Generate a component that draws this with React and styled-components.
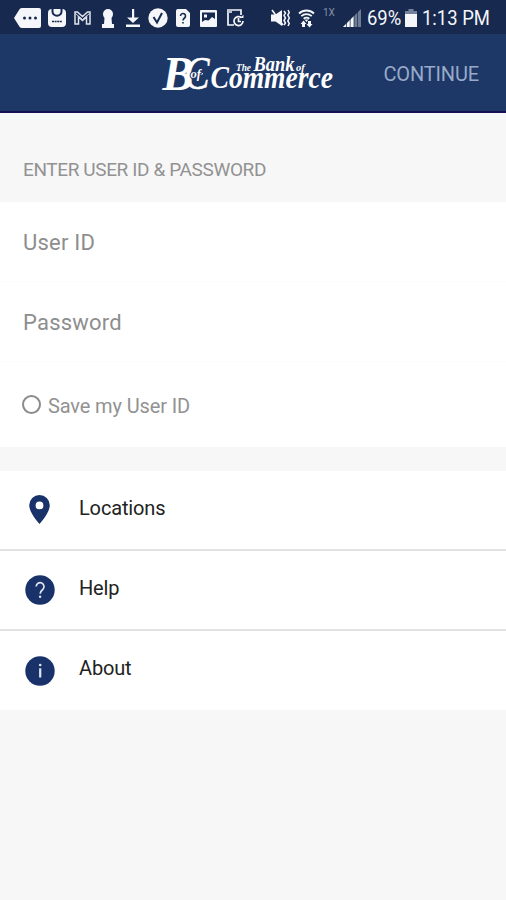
import React from "react";
import styled, { createGlobalStyle } from "styled-components";

const GlobalStyle = createGlobalStyle`
  * {
    box-sizing: border-box;
  }
  body {
    margin: 0;
    background-color: #f7f7f7;
    font-family: Roboto, "Liberation Sans", sans-serif;
  }
`;

const Screen = styled.div`
  width: 100%;
  min-height: 900px;
  background-color: #f7f7f7;
`;

const StatusBar = styled.div`
  height: 34px;
  display: flex;
  align-items: center;
  padding: 2px 15px 0 14px;
  background-color: #17294f;
  color: #f4f6fa;
`;

const StatusIcon = styled.svg`
  display: block;
  flex: none;
  margin-left: ${(props) => props.$gap || 0}px;
  fill: #f4f6fa;
`;

const StatusText = styled.span`
  flex: none;
  width: ${(props) => props.$width}px;
  margin-left: ${(props) => props.$gap}px;
  font-size: 20.5px;
  line-height: 32px;
  white-space: nowrap;
  transform: scaleX(0.9);
  transform-origin: left center;
`;

const NetworkLabel = styled.span`
  flex: none;
  align-self: flex-start;
  width: 13px;
  margin-left: 8px;
  padding-top: 5px;
  font-size: 10px;
  line-height: 12px;
  color: #8590a8;
`;

const Header = styled.header`
  height: 79px;
  display: flex;
  align-items: center;
  justify-content: space-between;
  padding: 2px 27px 0 160px;
  background-color: #1d3766;
  border-bottom: 2px solid #160f55;
`;

const Logo = styled.svg`
  display: block;
  overflow: visible;
  fill: #ffffff;
  font-family: "Liberation Serif", serif;
  font-style: italic;
  font-weight: bold;
`;

const ContinueButton = styled.button`
  padding: 0;
  border: none;
  background: none;
  font-family: inherit;
  font-size: 20px;
  letter-spacing: -0.15px;
  color: #98aac9;
`;

const SectionTitle = styled.h2`
  height: 89px;
  margin: 0;
  padding: 45px 23px 0;
  font-size: 19px;
  font-weight: 400;
  line-height: 24px;
  letter-spacing: -0.38px;
  color: #929292;
`;

const Form = styled.form`
  background-color: #ffffff;
`;

const Field = styled.input`
  display: block;
  width: 100%;
  height: 80px;
  padding: 2px 23px 0;
  border: none;
  border-bottom: 1px solid #fcfcfc;
  outline: none;
  background: none;
  font-family: inherit;
  font-size: 22px;
  letter-spacing: 0.2px;

  &::placeholder {
    color: #8e8e8e;
    opacity: 1;
  }
`;

const SaveRow = styled.label`
  height: 85px;
  display: flex;
  align-items: center;
  padding: 2px 22px 0;
  font-size: 20px;
  letter-spacing: -0.13px;
  color: #929292;
`;

const Radio = styled.span`
  width: 19px;
  height: 19px;
  margin: 0 7px 2px 0;
  border: 2px solid #8b8b8b;
  border-radius: 50%;
`;

const Menu = styled.ul`
  margin: 24px 0 0;
  padding: 0;
  list-style: none;
  background-color: #ffffff;
`;

const MenuItem = styled.li`
  height: 80px;
  display: flex;
  align-items: center;
  padding: 0 24px;
  border-bottom: 2px solid #e2e2e2;
  font-size: 20px;
  letter-spacing: -0.15px;
  color: #222222;

  &:last-child {
    height: 79px;
    border-bottom: none;
  }

  svg {
    width: 32px;
    height: 32px;
    margin-right: 23px;
  }

  span {
    padding-bottom: 4px;
  }

  &:last-child span {
    padding-bottom: 6px;
  }
`;

const NotificationIcons = () => (
  <>
    <StatusIcon width="27" height="20" viewBox="0 0 27 20">
      <path d="M8 0h17a2 2 0 0 1 2 2v16a2 2 0 0 1-2 2H8a3 3 0 0 1-2.300-1L0 10l5.700-9A3 3 0 0 1 8 0Z" />
      <g fill="#17294f">
        <circle cx="10.500" cy="10" r="1.500" />
        <circle cx="16" cy="10" r="1.500" />
        <circle cx="21.500" cy="10" r="1.500" />
      </g>
    </StatusIcon>
    <StatusIcon $gap={7} width="18" height="18" viewBox="0 0 18 18">
      <rect width="18" height="18" rx="4" />
      <path d="M4.500 0v2.500c0 5.500 9 5.500 9 0V0" stroke="#17294f" strokeWidth="2" />
      <path d="M4 12.500h10" stroke="#17294f" strokeWidth="1.300" strokeDasharray="2 .6" />
    </StatusIcon>
    <StatusIcon $gap={8} width="17" height="14" viewBox="0 0 17 14">
      <path
        d="M1 13V1h2.500l5 4.500 5-4.500H16v12h-3.500V6l-4 3.500-4-3.500v7Z"
        fill="none"
        stroke="#dfe3eb"
        strokeWidth="1.500"
      />
      <path d="M1.500 2.500 8.500 8.500l7-6" fill="none" stroke="#d5dae4" />
    </StatusIcon>
    <StatusIcon $gap={11} width="12" height="19" viewBox="0 0 12 19">
      <path d="M6 0a5 5 0 0 1 5 5c0 1.800-.8 3-1.500 4l.5 6h2v4H0v-4h2l.5-6C1.800 8 1 6.800 1 5a5 5 0 0 1 5-5Z" />
    </StatusIcon>
    <StatusIcon $gap={12} width="14" height="18" viewBox="0 0 14 18">
      <path d="M6 0h2.200v8.500H13L7 14 1 8.500h5ZM0 15.600h14V18H0Z" />
    </StatusIcon>
    <StatusIcon $gap={8} width="20" height="20" viewBox="0 0 20 20">
      <circle cx="10" cy="10" r="9.700" />
      <path d="m5.500 9 3.500 5.500L14 5" fill="none" stroke="#17294f" strokeWidth="2" />
    </StatusIcon>
    <StatusIcon $gap={8} width="14" height="18" viewBox="0 0 14 18">
      <path d="M2 0h8l4 4v12a2 2 0 0 1-2 2H2a2 2 0 0 1-2-2V2a2 2 0 0 1 2-2Z" />
      <path
        d="M4.500 7a2.500 2.500 0 1 1 4 2C7.400 9.800 7 10.300 7 11.500M7 13v1.600"
        fill="none"
        stroke="#17294f"
        strokeWidth="1.600"
      />
    </StatusIcon>
    <StatusIcon $gap={10} width="17" height="17" viewBox="0 0 17 17">
      <path
        fillRule="evenodd"
        d="M1 0h15a1 1 0 0 1 1 1v15a1 1 0 0 1-1 1H1a1 1 0 0 1-1-1V1a1 1 0 0 1 1-1Zm1 2.500V12l3-2 3.500.5L12 7l3 2V2.500Z"
      />
      <rect x="4" y="4.500" width="3" height="3" />
    </StatusIcon>
    <StatusIcon $gap={10} width="17" height="18" viewBox="0 0 17 18">
      <path d="M14 6V1H1v15h6" fill="none" stroke="#f4f6fa" strokeWidth="1.700" />
      <path d="M1 1h4v3H1Z" fill="#b9c0cf" />
      <path
        d="M14.500 8.700A4.500 4.500 0 1 0 16 12M11.500 9v3.500H14"
        fill="none"
        stroke="#f4f6fa"
        strokeWidth="1.700"
      />
      <path d="M13 9h3.500V5.800Z" />
    </StatusIcon>
  </>
);

const SystemIcons = () => (
  <>
    <StatusIcon $gap={27} width="19" height="18" viewBox="0 0 19 18">
      <path d="M0 5.500h4.500L11 1v16l-6.500-4.500H0Z" />
      <path d="M1 1l11 15" stroke="#f4f6fa" strokeWidth="1.600" />
      <path
        d="m13 2 1.500 2L13 6.500 14.500 9 13 11.500l1.500 2.500L13 16M17 1l1.300 2.500L16.800 6l1.500 3-1.500 3 1.500 2.500L17 17"
        fill="none"
        stroke="#f4f6fa"
        strokeWidth="1.500"
      />
    </StatusIcon>
    <StatusIcon $gap={8} width="17" height="19" viewBox="0 0 17 19">
      <g fill="none" stroke="#f4f6fa" strokeWidth="1.800">
        <path d="M1 4.500c4.300-4 10.700-4 15 0" />
        <path d="M3.300 7.200c3-2.700 7.400-2.700 10.400 0" />
        <path d="M5.700 9.800c1.600-1.400 4-1.400 5.600 0" />
      </g>
      <path d="m8.500 13-2-2.500h4ZM2.500 15l3-3.500 3 3.500H7v3H4v-3ZM8.500 15H10v-3h3v3h1.500l-3 3.500Z" />
    </StatusIcon>
    <NetworkLabel>1X</NetworkLabel>
    <StatusIcon $gap={7} width="18" height="18" viewBox="0 0 18 18">
      <path d="M0 18 18 0v18Z" fill="#6f7c96" />
      <path d="M0 18 11 7v11Z" />
      <path d="M3.500 12v6M7.200 8v10M11 4v14M14.500 2v16" stroke="#17294f" strokeWidth=".7" />
    </StatusIcon>
  </>
);

const BankLogo = () => (
  <Logo width="176" height="44" viewBox="0 0 176 44">
    <text x="2.500" y="37.500" fontSize="48" textLength="31" lengthAdjust="spacingAndGlyphs">
      B
    </text>
    <text
      x="24.500"
      y="37"
      fontSize="46"
      fontWeight="400"
      stroke="#ffffff"
      strokeWidth=".5"
      textLength="25"
      lengthAdjust="spacingAndGlyphs"
    >
      C
    </text>
    <path d="M34 20.500c3 1.500 6 1.700 9 1.200" fill="none" stroke="#ffffff" strokeWidth="1.300" />
    <text x="30.500" y="26" fontSize="12.500" stroke="#1d3766" strokeWidth="2" paintOrder="stroke">
      of
    </text>
    <text x="76" y="18.700" fontSize="11" textLength="15" lengthAdjust="spacingAndGlyphs">
      The
    </text>
    <text x="93.500" y="19" fontSize="20.500" textLength="41" lengthAdjust="spacingAndGlyphs">
      Bank
    </text>
    <text x="136" y="19" fontSize="10.500">
      of
    </text>
    <text x="50.500" y="36.200" fontSize="31" textLength="122.500" lengthAdjust="spacingAndGlyphs">
      Commerce
    </text>
  </Logo>
);

const PinIcon = () => (
  <svg viewBox="0 0 32 32">
    <path
      fillRule="evenodd"
      fill="#19336a"
      d="M15.500 1A10.300 10.300 0 0 0 5.200 11.300C5.200 19 15.500 30 15.500 30s10.300-11 10.300-18.700A10.300 10.300 0 0 0 15.500 1Zm0 6.500a3.900 3.900 0 1 1 0 7.800 3.900 3.900 0 0 1 0-7.800Z"
    />
  </svg>
);

const HelpIcon = () => (
  <svg viewBox="0 0 32 32">
    <circle cx="16" cy="16" r="14.700" fill="#19336a" />
    <path
      d="M12.200 12.500a3.900 3.900 0 1 1 6.500 3c-1.800 1.500-2.500 2.300-2.500 4.200"
      fill="none"
      stroke="#dfe6f3"
      strokeWidth="1.700"
    />
    <circle cx="16.100" cy="22.700" r="1.200" fill="#dfe6f3" />
  </svg>
);

const AboutIcon = () => (
  <svg viewBox="0 0 32 32">
    <circle cx="16" cy="16" r="14.700" fill="#19336a" />
    <path d="M16.200 13.300v9.200" stroke="#dfe6f3" strokeWidth="2.200" />
    <circle cx="16.200" cy="10" r="1.300" fill="#dfe6f3" />
  </svg>
);

const menuItems = [
  { label: "Locations", Icon: PinIcon },
  { label: "Help", Icon: HelpIcon },
  { label: "About", Icon: AboutIcon },
];

const App = () => {
  return (
    <Screen>
      <GlobalStyle />
      <StatusBar>
        <NotificationIcons />
        <SystemIcons />
        <StatusText $gap={6} $width={35}>
          69%
        </StatusText>
        <StatusIcon $gap={3} width="12" height="18" viewBox="0 0 12 18">
          <path d="M3.500 0h5v2H12v4H0V2h3.500Z" fill="#75819a" />
          <path d="M0 5h12v13H0Z" />
        </StatusIcon>
        <StatusText $gap={5} $width={69}>
          1:13 PM
        </StatusText>
      </StatusBar>
      <Header>
        <BankLogo />
        <ContinueButton>CONTINUE</ContinueButton>
      </Header>
      <SectionTitle>ENTER USER ID &amp; PASSWORD</SectionTitle>
      <Form>
        <Field type="text" placeholder="User ID" />
        <Field type="password" placeholder="Password" />
        <SaveRow>
          <Radio />
          Save my User ID
        </SaveRow>
      </Form>
      <Menu>
        {menuItems.map(({ label, Icon }) => (
          <MenuItem key={label}>
            <Icon />
            <span>{label}</span>
          </MenuItem>
        ))}
      </Menu>
    </Screen>
  );
};

export default App;
